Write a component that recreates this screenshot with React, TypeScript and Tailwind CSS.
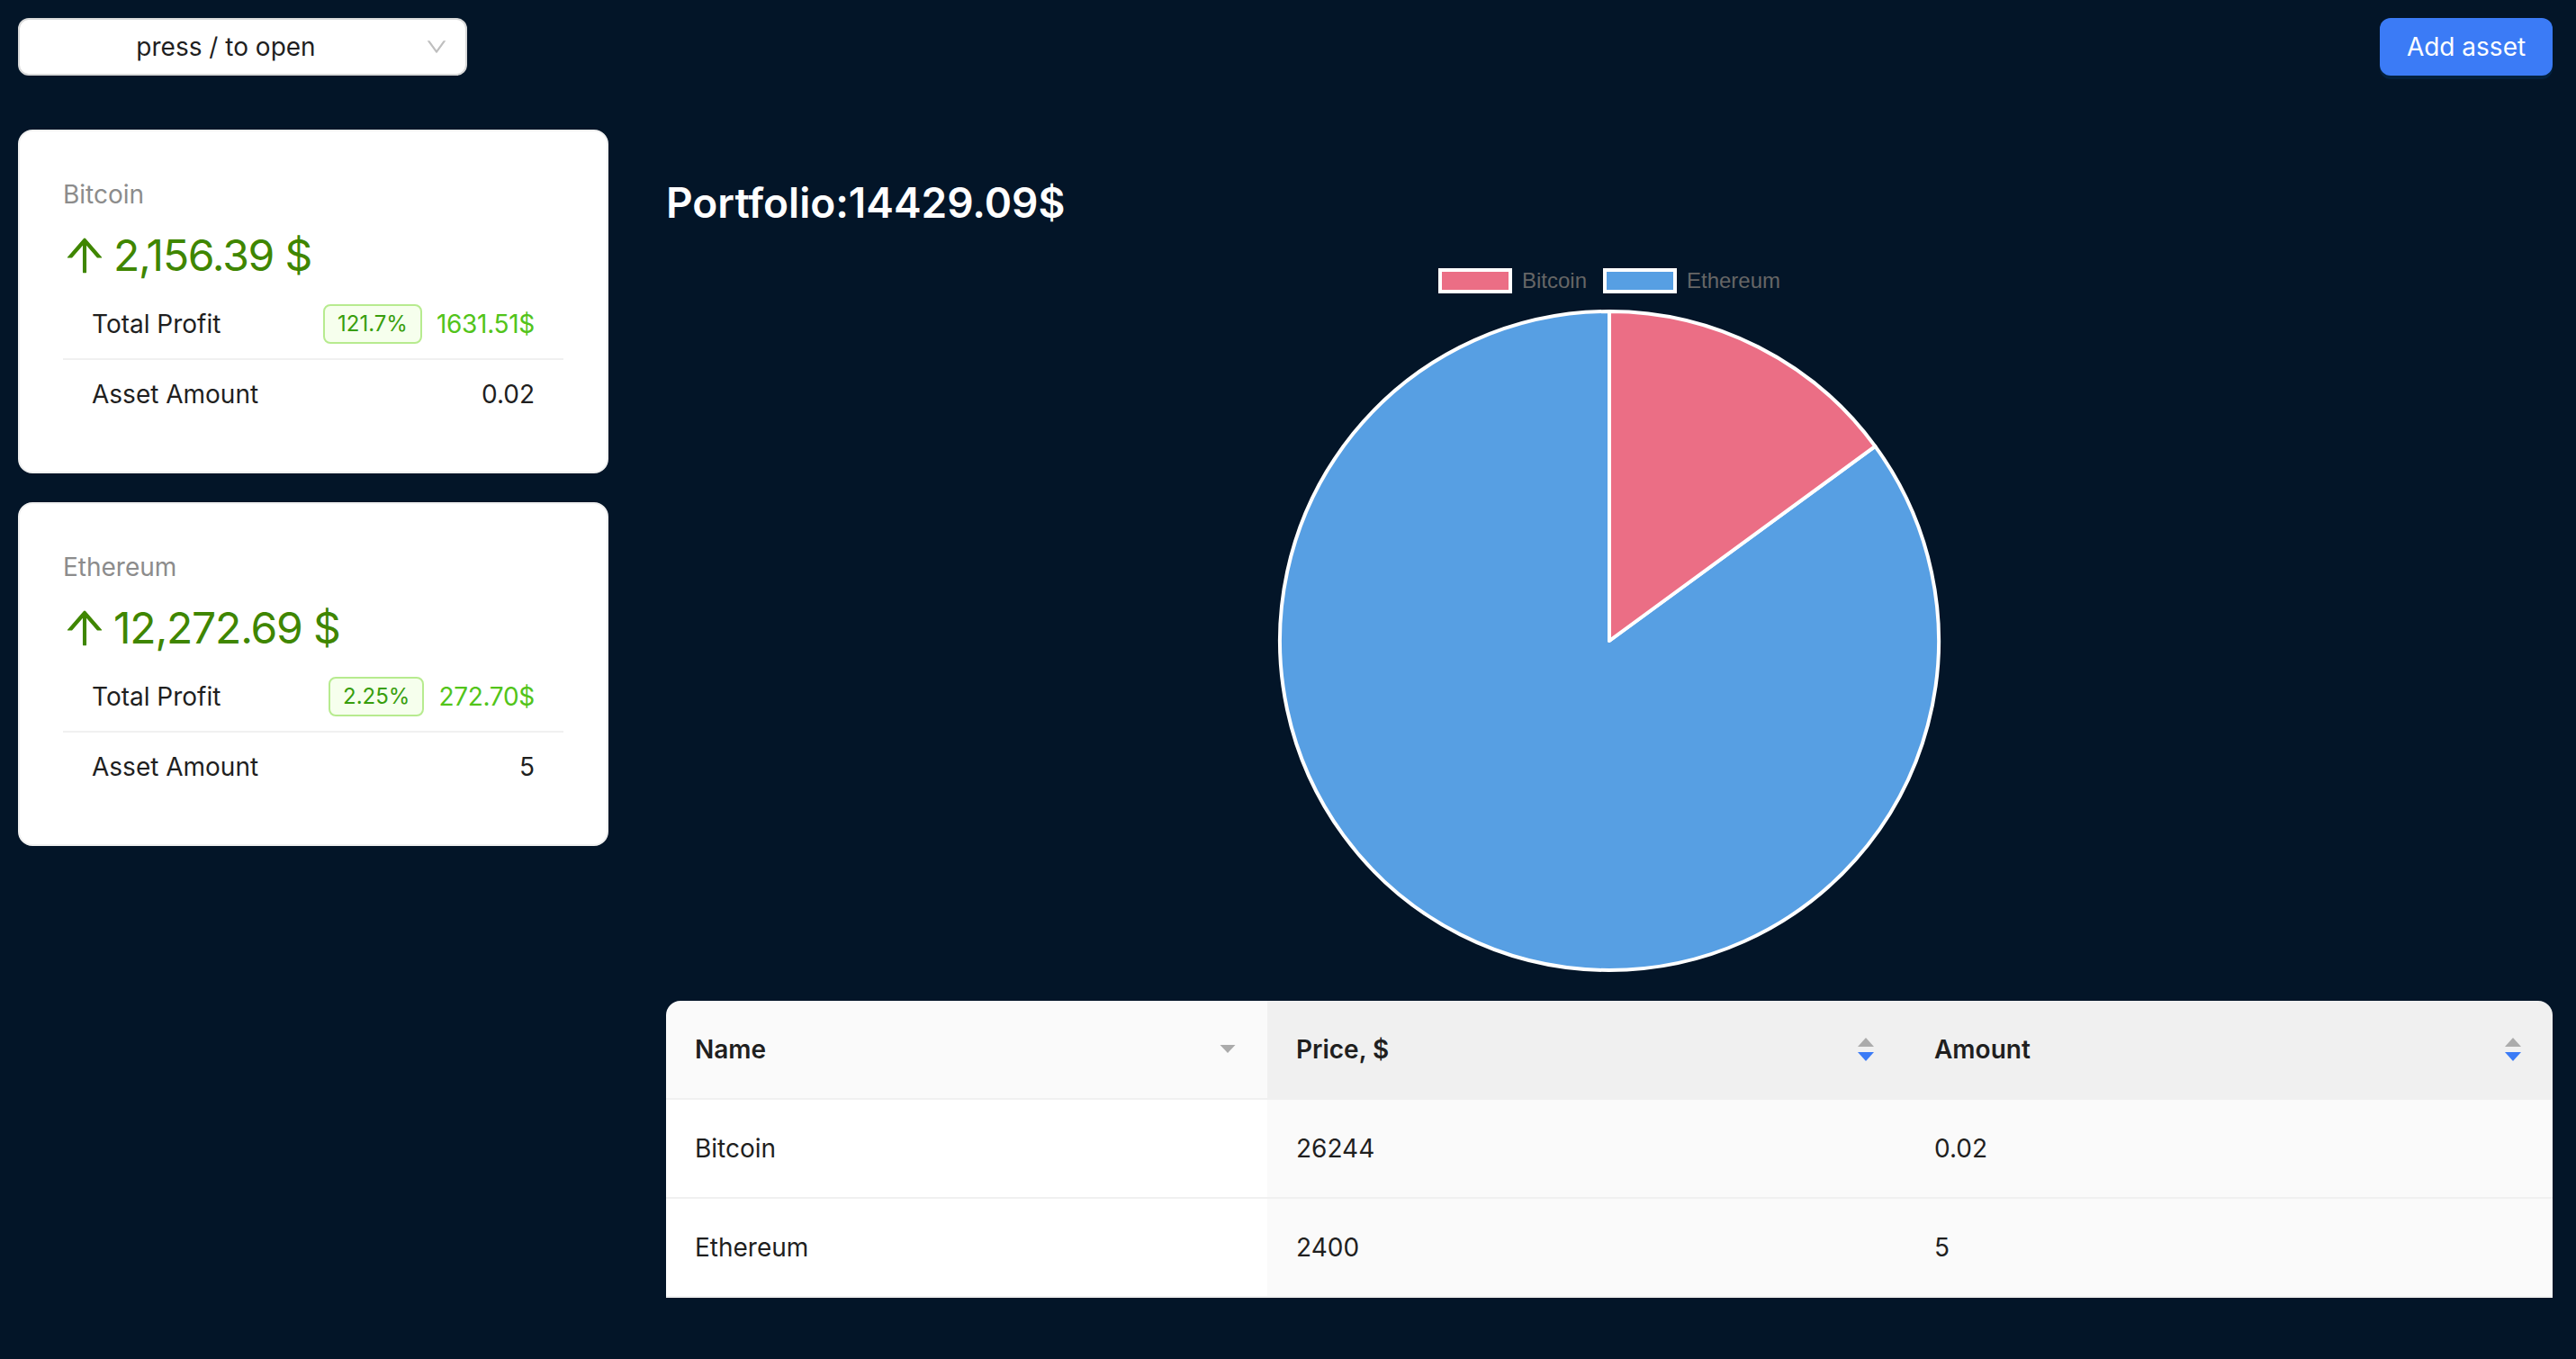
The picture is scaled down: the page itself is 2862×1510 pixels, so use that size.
import React from "react";

const assets = [
  { name: "Bitcoin", value: "2,156.39", percent: "121.7%", profit: "1631.51$", amount: "0.02", price: "26244", raw: 2156.39 },
  { name: "Ethereum", value: "12,272.69", percent: "2.25%", profit: "272.70$", amount: "5", price: "2400", raw: 12272.69 },
];

function ArrowUp() {
  return (
    <svg viewBox="64 64 896 896" width="48" height="48" fill="#3f8600" className="shrink-0">
      <path d="M868 545.5L536.1 163a31.96 31.96 0 00-48.3 0L156 545.5a7.97 7.97 0 006 13.2h81c4.6 0 9-2 12.1-5.5L474 300.9V864c0 4.4 3.6 8 8 8h60c4.4 0 8-3.6 8-8V300.9l218.9 252.3c3 3.5 7.4 5.5 12.1 5.5h81c6.8 0 10.5-8 6-13.2z" />
    </svg>
  );
}

function Down() {
  return (
    <svg viewBox="64 64 896 896" width="24" height="24" fill="#bfbfbf" className="shrink-0">
      <path d="M884 256h-75c-5.1 0-9.9 2.5-12.9 6.6L512 654.2 227.9 262.6c-3-4.1-7.8-6.6-12.9-6.6h-75c-6.5 0-10.3 7.4-6.5 12.7l352.6 486.1c12.8 17.6 39 17.6 51.7 0l352.6-486.1c3.9-5.3.1-12.7-6.4-12.7z" />
    </svg>
  );
}

function Sorter() {
  return (
    <svg width="24" height="26" viewBox="0 0 24 26" className="shrink-0">
      <path d="M3 10 L12 0 L21 10 Z" fill="#ababab" />
      <path d="M3 16 L21 16 L12 26 Z" fill="#3b7bf6" />
    </svg>
  );
}

function Caret() {
  return (
    <svg width="24" height="10" viewBox="0 0 24 10" className="shrink-0">
      <path d="M3.5 0 L20.5 0 L12 9 Z" fill="#ababab" />
    </svg>
  );
}

function AssetCard({ a }: { a: (typeof assets)[number] }) {
  return (
    <div className="rounded-[16px] border-2 border-[#f0f0f0] bg-white px-[48px] pb-[48px] pt-[48px]">
      <div className="text-[28px] leading-[44px] text-[#8c8c8c]">{a.name}</div>
      <div className="mt-[8px] flex h-[76px] items-center text-[48px] leading-[76px] text-[#3f8600]">
        <ArrowUp />
        <span className="ml-[8px] tracking-[-1.2px]">{a.value} $</span>
      </div>
      <div>
        <div className="flex h-[78px] items-center justify-between border-b-2 border-[#f0f0f0] px-[32px]">
          <span className="text-[#1f1f1f]">Total Profit</span>
          <div className="flex items-center">
            <span className="mr-[16px] rounded-[8px] border-2 border-[#b7eb8f] bg-[#f6ffed] px-[14px] text-[24px] leading-[40px] text-[#389e0d]">
              {a.percent}
            </span>
            <span className="tracking-[-0.3px] text-[#52c41a]">{a.profit}</span>
          </div>
        </div>
        <div className="flex h-[76px] items-center justify-between px-[32px]">
          <span className="text-[#1f1f1f]">Asset Amount</span>
          <span className="text-[#1f1f1f]">{a.amount}</span>
        </div>
      </div>
    </div>
  );
}

function Pie() {
  const total = assets.reduce((s, a) => s + a.raw, 0);
  const f = assets[0].raw / total;
  const ang = f * 2 * Math.PI;
  const cx = 370, cy = 370, r = 366;
  const ex = cx + r * Math.sin(ang);
  const ey = cy - r * Math.cos(ang);
  const large = f > 0.5 ? 1 : 0;
  return (
    <svg width="740" height="740" viewBox="0 0 740 740" className="block">
      <path
        d={`M${cx} ${cy} L${ex} ${ey} A${r} ${r} 0 ${1 - large} 1 ${cx} ${cy - r} Z`}
        fill="#579fe3"
        stroke="#ffffff"
        strokeWidth="4"
        strokeLinejoin="round"
      />
      <path
        d={`M${cx} ${cy} L${cx} ${cy - r} A${r} ${r} 0 ${large} 1 ${ex} ${ey} Z`}
        fill="#eb6e85"
        stroke="#ffffff"
        strokeWidth="4"
        strokeLinejoin="round"
      />
    </svg>
  );
}

export default function App() {
  return (
    <div className="min-h-screen w-full bg-[#031528] font-['Inter',sans-serif] text-[28px] leading-[44px]">
      <header className="flex items-start justify-between pl-[20px] pr-[26px] pt-[20px]">
        <div className="flex h-[64px] w-[499px] items-center rounded-[12px] border-2 border-[#d9d9d9] bg-white pl-[22px] pr-[20px]">
          <span className="flex-1 text-center text-[#1f1f1f]">press / to open</span>
          <span className="ml-[15px]">
            <Down />
          </span>
        </div>
        <button className="h-[64px] w-[192px] rounded-[12px] bg-[#3b7bf6] text-[28px] text-white shadow-[0_4px_0_rgba(5,145,255,0.1)]">
          Add asset
        </button>
      </header>

      <main className="mt-[60px] flex pl-[20px] pr-[26px]">
        <div className="flex w-[656px] shrink-0 flex-col gap-[32px]">
          {assets.map((a) => (
            <AssetCard key={a.name} a={a} />
          ))}
        </div>

        <div className="ml-[64px] flex-1 pt-[50px]">
          <h3 className="text-[46px] font-semibold leading-[62px] text-white">Portfolio:14429.09$</h3>

          <div className="mt-[42px] flex items-center justify-center font-['Liberation_Sans',Arial,sans-serif] text-[24px] leading-[28px] text-[#666666]">
            <span className="h-[28px] w-[82px] border-[4px] border-white bg-[#eb6e85]" />
            <span className="ml-[11px]">Bitcoin</span>
            <span className="ml-[18px] h-[28px] w-[82px] border-[4px] border-white bg-[#579fe3]" />
            <span className="ml-[11px]">Ethereum</span>
          </div>

          <div className="mt-[16px] flex justify-center">
            <Pie />
          </div>

          <div className="mt-[30px] overflow-hidden rounded-t-[16px] text-[#1f1f1f]">
            <div className="grid grid-cols-[668px_709px_1fr]">
              <div className="flex h-[110px] items-center justify-between border-b-2 border-[#f0f0f0] bg-[#fafafa] px-[32px] font-semibold">
                <span>Name</span>
                <Caret />
              </div>
              <div className="flex h-[110px] items-center justify-between border-b-2 border-[#f0f0f0] bg-[#f0f0f0] px-[32px] font-semibold">
                <span>Price, $</span>
                <Sorter />
              </div>
              <div className="flex h-[110px] items-center justify-between border-b-2 border-[#f0f0f0] bg-[#f0f0f0] px-[32px] font-semibold">
                <span>Amount</span>
                <Sorter />
              </div>
              {assets.map((a) => (
                <React.Fragment key={a.name}>
                  <div className="flex h-[110px] items-center border-b-2 border-[#f0f0f0] bg-white px-[32px]">{a.name}</div>
                  <div className="flex h-[110px] items-center border-b-2 border-[#f0f0f0] bg-[#fafafa] px-[32px]">{a.price}</div>
                  <div className="flex h-[110px] items-center border-b-2 border-[#f0f0f0] bg-[#fafafa] px-[32px]">{a.amount}</div>
                </React.Fragment>
              ))}
            </div>
          </div>
        </div>
      </main>
    </div>
  );
}
